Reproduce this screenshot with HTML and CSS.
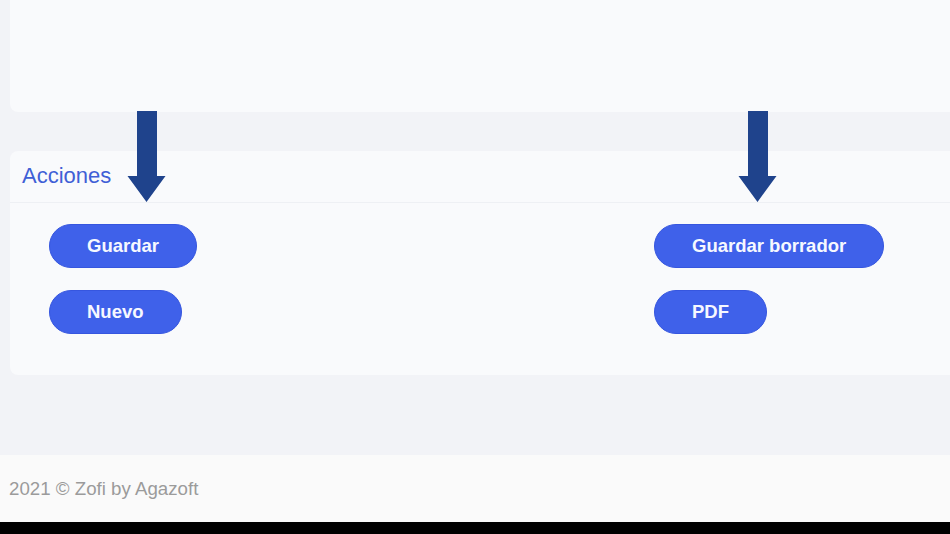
FILE: index.html
```html
<!DOCTYPE html>
<html lang="es">
<head>
<meta charset="utf-8">
<title>Acciones</title>
<link rel="stylesheet" href="styles.css">
</head>
<body>
<div class="page">
  <main class="content">
    <section class="card card-top"></section>
    <section class="card card-actions">
      <header class="card-header">Acciones</header>
      <div class="card-body">
        <div class="col">
          <button class="btn">Guardar</button>
          <button class="btn">Nuevo</button>
        </div>
        <div class="col">
          <button class="btn">Guardar borrador</button>
          <button class="btn">PDF</button>
        </div>
      </div>
    </section>
  </main>
  <footer class="footer">2021 © Zofi by Agazoft</footer>
  <div class="bottom-bar"></div>
  <svg class="arrow arrow-left" width="40" height="92" viewBox="0 0 40 92"><polygon points="10,0 30,0 30,65 38.5,65 19.5,91 0.5,65 10,65" fill="#1f438c"/></svg>
  <svg class="arrow arrow-right" width="40" height="92" viewBox="0 0 40 92"><polygon points="10,0 30,0 30,65 38.5,65 19.5,91 0.5,65 10,65" fill="#1f438c"/></svg>
</div>
</body>
</html>
```
FILE: styles.css
```css
* { box-sizing: border-box; }
html, body { margin: 0; padding: 0; }
body {
  width: 950px;
  height: 534px;
  overflow: hidden;
  background: #f2f3f7;
  font-family: "Liberation Sans", Arial, sans-serif;
}
.page {
  position: relative;
  height: 534px;
  display: flex;
  flex-direction: column;
}
.content {
  flex: 1;
  padding-left: 10px;
  display: flex;
  flex-direction: column;
}
.card {
  background: #f9fafc;
  border-radius: 8px 0 0 8px;
  margin-right: -20px;
}
.card-top {
  height: 112px;
  border-top-left-radius: 0;
}
.card-actions {
  margin-top: 39px;
  height: 224px;
}
.card-header {
  height: 52px;
  padding: 12px 0 0 12px;
  font-size: 22px;
  color: #3f5fd6;
  border-bottom: 1px solid #eef0f4;
}
.card-body {
  display: grid;
  grid-template-columns: 605px 1fr;
  padding: 21px 0 0 39px;
}
.col {
  display: flex;
  flex-direction: column;
  align-items: flex-start;
  gap: 22px;
}
.btn {
  height: 44px;
  padding: 0 37px;
  border: 1px solid #3656df;
  border-radius: 22px;
  background: #3f61ea;
  color: #f6f8ff;
  font-family: "Liberation Sans", Arial, sans-serif;
  font-weight: bold;
  font-size: 18.5px;
  line-height: 42px;
}
.footer {
  height: 67px;
  background: #fafafa;
  color: #9b9b9b;
  font-size: 18.7px;
  padding: 23px 0 0 9px;
}
.bottom-bar {
  height: 12px;
  background: #000;
}
.arrow {
  position: absolute;
  top: 111px;
}
.arrow-left { left: 127px; }
.arrow-right { left: 738px; }
```
